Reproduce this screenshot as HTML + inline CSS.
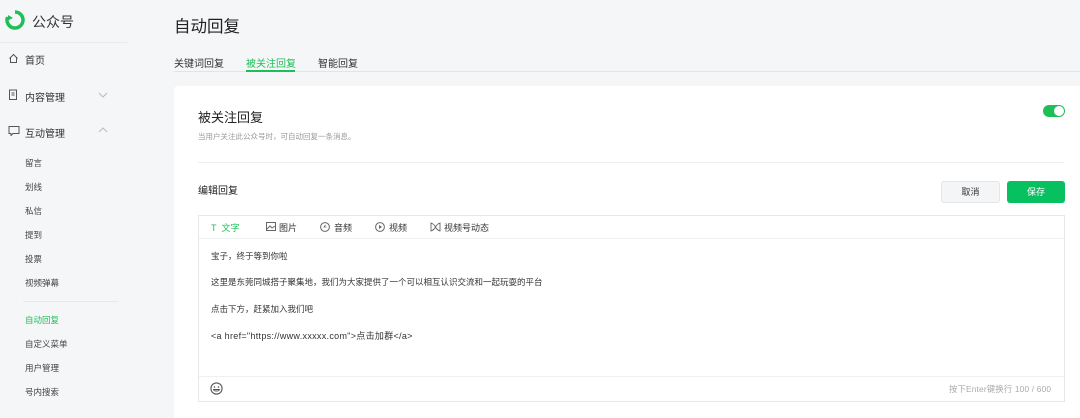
<!DOCTYPE html>
<html><head><meta charset="utf-8"><style>
*{margin:0;padding:0;box-sizing:border-box}
body{width:1080px;height:418px;overflow:hidden;background:#f5f6f8;font-family:"Liberation Sans","Noto Sans CJK SC",sans-serif;color:#333;position:relative}
.a{position:absolute;white-space:nowrap}
.side{font-size:10px;color:#333}
.sub{font-size:8.5px;color:#444}
</style></head><body>
<svg class="a" style="left:5px;top:10px" width="20" height="20" viewBox="0 0 20 20"><path d="M10 2a8 8 0 1 1-7.5 5.2" fill="none" stroke="#1fbe58" stroke-width="3.5"/><path d="M2 11l1-6 5 3z" fill="#1fbe58"/><circle cx="10" cy="10" r="3" fill="#f5f6f8"/></svg>
<div class="a" style="left:32px;top:12px;font-size:14px;color:#333">公众号</div>
<div class="a" style="left:0;top:42px;width:127px;height:1px;background:#eaebee"></div>
<svg class="a" style="left:8px;top:53px" width="11" height="11" viewBox="0 0 11 11"><path d="M1.5 5.5L5.5 1.5 9.5 5.5M2.5 4.5V9.5H8.5V4.5" fill="none" stroke="#555" stroke-width="1"/></svg>
<div class="a side" style="left:25px;top:52px">首页</div>
<svg class="a" style="left:8px;top:89px" width="11" height="12" viewBox="0 0 11 12"><rect x="1.5" y="1" width="7" height="9.5" fill="none" stroke="#555"/><path d="M3.5 4h3M3.5 6h3" stroke="#555"/></svg>
<div class="a side" style="left:25px;top:89px">内容管理</div>
<svg class="a" style="left:98px;top:91px" width="10" height="8"><path d="M1 2l4 4 4-4" fill="none" stroke="#bbb"/></svg>
<svg class="a" style="left:8px;top:125px" width="12" height="11"><path d="M1 1.5h10v7H5l-2 2V8.5H1z" fill="none" stroke="#555"/></svg>
<div class="a side" style="left:25px;top:125px">互动管理</div>
<svg class="a" style="left:98px;top:126px" width="10" height="8"><path d="M1 6l4-4 4 4" fill="none" stroke="#bbb"/></svg>
<div class="a sub" style="left:25px;top:157px">留言</div>
<div class="a sub" style="left:25px;top:181px">划线</div>
<div class="a sub" style="left:25px;top:205px">私信</div>
<div class="a sub" style="left:25px;top:229px">提到</div>
<div class="a sub" style="left:25px;top:253px">投票</div>
<div class="a sub" style="left:25px;top:277px">视频弹幕</div>
<div class="a" style="left:23px;top:301px;width:95px;height:1px;background:#e8e9ec"></div>
<div class="a sub" style="left:25px;top:314px;color:#1fbe58">自动回复</div>
<div class="a sub" style="left:25px;top:338px">自定义菜单</div>
<div class="a sub" style="left:25px;top:362px">用户管理</div>
<div class="a sub" style="left:25px;top:386px">号内搜索</div>

<div class="a" style="left:174px;top:13px;font-size:16.5px;color:#222">自动回复</div>
<div class="a" style="left:174px;top:55px;font-size:10px;color:#333">关键词回复</div>
<div class="a" style="left:246px;top:55px;font-size:10px;color:#1fbe58">被关注回复</div>
<div class="a" style="left:318px;top:55px;font-size:10px;color:#333">智能回复</div>
<div class="a" style="left:174px;top:71px;width:906px;height:1px;background:#e3e4e7"></div>
<div class="a" style="left:246px;top:70px;width:49px;height:2px;background:#1fbe58"></div>

<div class="a" style="left:174px;top:86px;width:906px;height:332px;background:#fff;border-radius:4px 0 0 0"></div>
<div class="a" style="left:198px;top:107px;font-size:13px;color:#222">被关注回复</div>
<div class="a" style="left:198px;top:131px;font-size:7.5px;color:#999">当用户关注此公众号时，可自动回复一条消息。</div>
<div class="a" style="left:1043px;top:105px;width:22px;height:12px;border-radius:6px;background:#1fbe58"></div>
<div class="a" style="left:1054px;top:106px;width:10px;height:10px;border-radius:5px;background:#fff"></div>
<div class="a" style="left:198px;top:162px;width:866px;height:1px;background:#eeeff1"></div>
<div class="a" style="left:198px;top:182px;font-size:10px;color:#222">编辑回复</div>
<div class="a" style="left:941px;top:181px;width:59px;height:22px;background:#f4f5f7;border:1px solid #e4e5e8;border-radius:3px;font-size:9px;line-height:20px;text-align:center;color:#333">取消</div>
<div class="a" style="left:1007px;top:181px;width:58px;height:22px;background:#07c160;border-radius:3px;font-size:9px;line-height:22px;text-align:center;color:#fff">保存</div>

<div class="a" style="left:198px;top:215px;width:867px;height:187px;border:1px solid #e6e7ea"></div>
<div class="a" style="left:199px;top:238px;width:865px;height:1px;background:#eeeff1"></div>
<div class="a" style="left:199px;top:376px;width:865px;height:1px;background:#eeeff1"></div>
<div class="a" style="left:211px;top:221px;font-size:9px;color:#1fbe58">T&nbsp; 文字</div>
<svg class="a" style="left:266px;top:222px" width="10" height="9"><rect x=".5" y=".5" width="9" height="8" fill="none" stroke="#666"/><path d="M1 7l3-3 2 2 3-2" fill="none" stroke="#666"/></svg>
<div class="a" style="left:279px;top:221px;font-size:9px;color:#333">图片</div>
<svg class="a" style="left:320px;top:222px" width="10" height="10"><circle cx="5" cy="5" r="4.4" fill="none" stroke="#666"/><path d="M5.5 3L4 5h2.5" fill="none" stroke="#666" stroke-width=".8"/></svg>
<div class="a" style="left:334px;top:221px;font-size:9px;color:#333">音频</div>
<svg class="a" style="left:375px;top:222px" width="10" height="10"><circle cx="5" cy="5" r="4.4" fill="none" stroke="#666"/><path d="M4 3v4l3-2z" fill="#666"/></svg>
<div class="a" style="left:389px;top:221px;font-size:9px;color:#333">视频</div>
<svg class="a" style="left:430px;top:222px" width="11" height="10"><path d="M1 1c3 1 4 3 4.5 4 .5-1 1.5-3 4.5-4v8c-3-1-4-3-4.5-4C5 6 4 8 1 9z" fill="none" stroke="#666" stroke-width=".9"/></svg>
<div class="a" style="left:444px;top:221px;font-size:9px;color:#333">视频号动态</div>

<div class="a" style="left:211px;top:250px;font-size:8.5px;color:#333">宝子，终于等到你啦</div>
<div class="a" style="left:211px;top:276px;font-size:8.5px;color:#333">这里是东莞同城搭子聚集地，我们为大家提供了一个可以相互认识交流和一起玩耍的平台</div>
<div class="a" style="left:211px;top:303px;font-size:8.5px;color:#333">点击下方，赶紧加入我们吧</div>
<div class="a" style="left:211px;top:329px;font-size:9px;letter-spacing:0.3px;color:#333">&lt;a href="https://www.xxxxx.com"&gt;点击加群&lt;/a&gt;</div>
<svg class="a" style="left:210px;top:382px" width="13" height="13"><circle cx="6.5" cy="6.5" r="5.6" fill="none" stroke="#555" stroke-width="1.1"/><circle cx="4.5" cy="5" r=".8" fill="#555"/><circle cx="8.5" cy="5" r=".8" fill="#555"/><path d="M3.5 7.5h6c-.5 2-5.5 2-6 0z" fill="none" stroke="#555" stroke-width=".9"/></svg>
<div class="a" style="left:949px;top:383px;font-size:8.3px;letter-spacing:0.2px;color:#aaa">按下Enter键换行 100 / 600</div>
</body></html>
